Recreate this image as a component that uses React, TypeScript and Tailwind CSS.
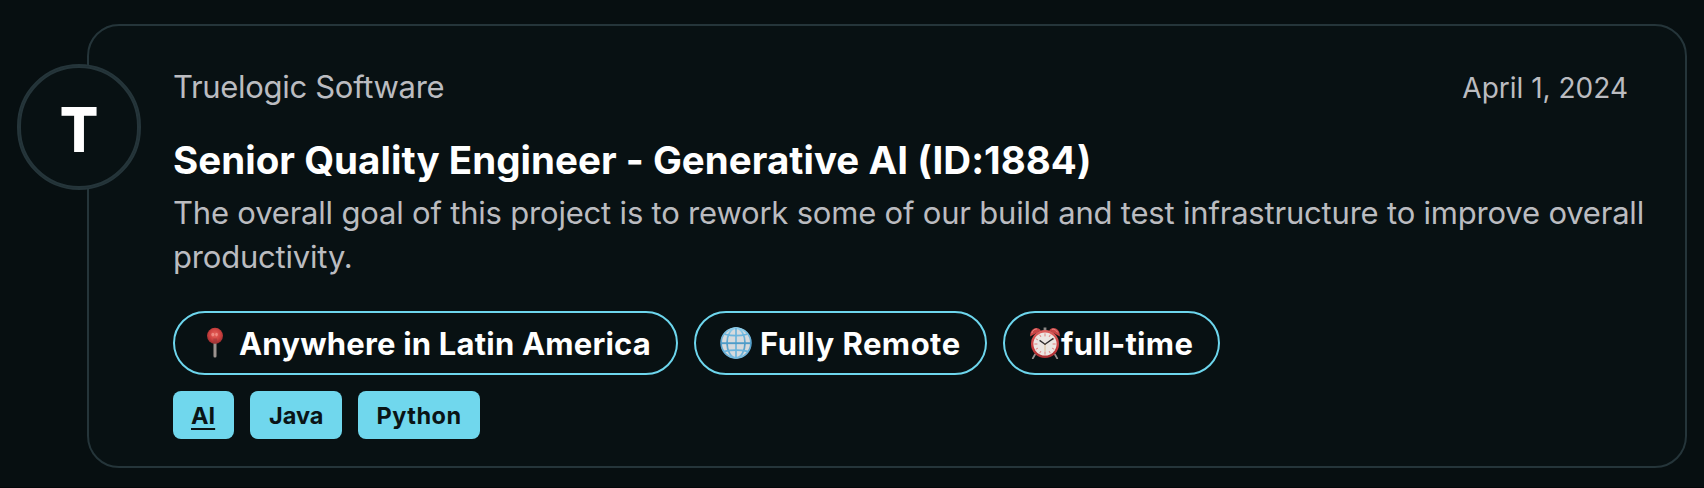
import type { ReactNode } from "react";

function PinIcon() {
  return (
    <svg className="h-8 w-8 shrink-0" viewBox="0 0 32 32">
      <defs>
        <radialGradient id="pinHead" cx="0.5" cy="0.42" r="0.55">
          <stop offset="0" stopColor="#e8635b" />
          <stop offset="0.6" stopColor="#cf4341" />
          <stop offset="1" stopColor="#a33031" />
        </radialGradient>
        <linearGradient id="pinStem" x1="0" x2="1" y1="0" y2="0">
          <stop offset="0" stopColor="#6d6764" />
          <stop offset="0.5" stopColor="#aea6a2" />
          <stop offset="1" stopColor="#6d6764" />
        </linearGradient>
      </defs>
      <rect x="14.3" y="15" width="3.4" height="15.4" rx="1.5" fill="url(#pinStem)" />
      <circle cx="16" cy="8.8" r="8" fill="url(#pinHead)" />
      <ellipse cx="13.8" cy="7.6" rx="1.5" ry="1.9" fill="#ffb9ae" opacity="0.5" />
      <ellipse cx="17.6" cy="7.6" rx="1.3" ry="1.8" fill="#ffb9ae" opacity="0.5" />
      <path d="M14.4 11.5h3.6v4.8h-3.6z" fill="#9b3a3c" opacity="0.6" />
    </svg>
  );
}

function GlobeIcon() {
  return (
    <svg className="h-8 w-8 shrink-0" viewBox="0 0 32 32">
      <defs>
        <linearGradient id="globeLine" x1="0" x2="0" y1="0" y2="1">
          <stop offset="0" stopColor="#8fd0ee" />
          <stop offset="0.55" stopColor="#4f9cc8" />
          <stop offset="1" stopColor="#78bbdf" />
        </linearGradient>
      </defs>
      <circle cx="16" cy="16" r="15.2" fill="#d6dadd" />
      <g fill="none" stroke="#6bb4dc" strokeWidth="1.7">
        <circle cx="16" cy="16" r="14.9" stroke="url(#globeLine)" />
        <ellipse cx="16" cy="16" rx="9" ry="14.9" stroke="url(#globeLine)" />
        <path d="M16 1v30" />
        <path d="M4.8 7.2Q16 10.2 27.2 7.2" />
        <path d="M1.2 16.2h29.6" stroke="#4f9cc8" strokeWidth="1.9" />
        <path d="M4.2 24.4Q16 21.8 27.8 24.4" />
      </g>
    </svg>
  );
}

function ClockIcon() {
  return (
    <svg className="h-8 w-8 shrink-0" viewBox="0 0 32 32">
      <defs>
        <linearGradient id="clockRim" x1="0" x2="0" y1="0" y2="1">
          <stop offset="0" stopColor="#de6260" />
          <stop offset="0.6" stopColor="#c83d3e" />
          <stop offset="1" stopColor="#a62e32" />
        </linearGradient>
      </defs>
      <path d="M6 27.5 3.8 31.4M26 27.5l2.2 3.9" stroke="#96918f" strokeWidth="1.8" strokeLinecap="round" />
      <path d="M14.6.6h2.8v3.2h-2.8z" fill="#8d8987" />
      <path d="M9 3.8 6.6 2M23 3.8 25.4 2" stroke="#8d8987" strokeWidth="1.5" />
      <path d="M1.2 9.6C.8 5 3.6 1 7.4 1c2 0 3.6 1 4.4 2.6z" fill="#c94546" />
      <path d="M30.8 9.6C31.2 5 28.4 1 24.6 1c-2 0-3.6 1-4.4 2.6z" fill="#c94546" />
      <path d="M2.8 6.2C3.6 3.6 5.4 2 7.8 2M22.8 2.2c2.6-.2 4.8 1.2 5.8 3.2" fill="none" stroke="#e68a85" strokeWidth="1" />
      <circle cx="16" cy="17" r="14" fill="url(#clockRim)" />
      <circle cx="16" cy="17" r="11.6" fill="#ebe6e2" />
      <g stroke="#e07f7d" strokeWidth="1">
        <path d="M16 6.4v3M16 24.6v3M5.4 17h3M23.6 17h3" />
        <path d="m10.7 7.8 1.2 2.1M20.1 24.1l1.2 2.1M6.8 11.7l2.1 1.2M23.1 21.1l2.1 1.2M21.3 7.8l-1.2 2.1M11.9 24.1l-1.2 2.1M25.2 11.7l-2.1 1.2M8.9 21.1l-2.1 1.2" />
      </g>
      <path d="M16 16.5v8" stroke="#d8b98b" strokeWidth="0.9" />
      <path d="M10.6 13.4 16 17.2l8.4-5.8" fill="none" stroke="#2d2b2c" strokeWidth="1.3" strokeLinejoin="round" />
      <circle cx="16" cy="17" r="1" fill="#5b5049" />
    </svg>
  );
}

function Pill({ className, children }: { className: string; children: ReactNode }) {
  return (
    <div
      className={`flex h-16 items-center rounded-[32px] border-2 border-[#6dd6ed] pl-6 text-[31px] leading-[44px] font-bold whitespace-nowrap text-white ${className}`}
    >
      {children}
    </div>
  );
}

function Tag({ className, children }: { className: string; children: ReactNode }) {
  return (
    <div
      className={`flex h-12 items-center rounded-lg bg-[#70d7ed] pt-[2px] text-[23.5px] leading-8 font-bold whitespace-nowrap text-[#0a1416] ${className}`}
    >
      {children}
    </div>
  );
}

export default function App() {
  return (
    <div className="flex h-[488px] w-[1704px] border-b border-[#03080a] bg-[#070f11] pt-6 pl-[87px] font-['Inter',sans-serif]">
      <article className="relative h-[444px] w-[1600px] rounded-[32px] border-2 border-[#25353a] bg-[#081113] pt-[39px] pr-9 pl-[84px]">
        <div className="absolute top-[38px] -left-[72px] flex h-[126px] w-[124px] rounded-full border-2 border-[#25353a] bg-[#1a282c]">
          <div className="flex flex-1 items-center justify-center rounded-full border-2 border-[#25353a] bg-[#081113] pt-[6px] text-[62px] leading-none font-extrabold text-white">
            <span className="scale-x-[0.92]">T</span>
          </div>
        </div>

        <header className="flex items-baseline justify-between pr-[21px] text-[#bbbcc0]">
          <div className="text-[31px] leading-[44px] tracking-[-0.31px]">Truelogic Software</div>
          <div className="text-[28px] leading-[40px]">April 1, 2024</div>
        </header>

        <h2 className="mt-[27px] text-[38.5px] leading-[48px] font-bold tracking-[0.03px] whitespace-nowrap text-white">
          Senior Quality Engineer - Generative AI (ID:1884)
        </h2>
        <p className="mt-[7px] text-[31px] leading-[44px] tracking-[-0.197px] whitespace-nowrap text-[#bbbcc0]">
          The overall goal of this project is to rework some of our build and test infrastructure to improve overall
          <br />
          productivity.
        </p>

        <div className="mt-8 flex gap-4">
          <Pill className="w-[505px] tracking-[0.2px]">
            <PinIcon />
            <span className="ml-2 pt-[2px]">Anywhere in Latin America</span>
          </Pill>
          <Pill className="w-[293px] tracking-[0.48px]">
            <GlobeIcon />
            <span className="ml-2 pt-[2px]">Fully Remote</span>
          </Pill>
          <Pill className="w-[217px] tracking-[0.3px]">
            <ClockIcon />
            <span className="pt-[2px]">full-time</span>
          </Pill>
        </div>

        <div className="mt-4 flex gap-4">
          <Tag className="w-[61px] pl-[18px]">
            <span className="underline decoration-2 underline-offset-[4px]">AI</span>
          </Tag>
          <Tag className="w-[92px] pl-[19px]">Java</Tag>
          <Tag className="w-[122px] pl-[18.5px] tracking-[0.5px]">Python</Tag>
        </div>
      </article>
    </div>
  );
}
